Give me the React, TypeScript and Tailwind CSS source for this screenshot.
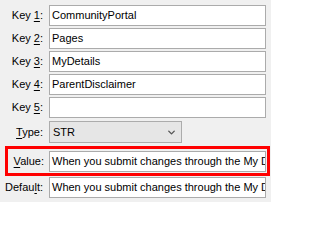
import { ChevronDown } from 'lucide-react'

const font = { fontFamily: '"Liberation Sans", Arial, sans-serif' }

function Label({ pre, key_, post, className = '' }: { pre: string; key_: string; post: string; className?: string }) {
  return (
    <span className={`w-[44px] shrink-0 text-right pr-[1px] text-[11px] text-black whitespace-nowrap ${className}`}>
      {pre}
      <span className="underline underline-offset-[2px]">{key_}</span>
      {post}
    </span>
  )
}

function TextBox({ value }: { value: string }) {
  return (
    <div className="ml-[5px] flex h-[21px] w-[217px] items-center overflow-hidden whitespace-nowrap border border-[#ababab] bg-white pl-[2px] text-[11px] text-black">
      {value}
    </div>
  )
}

const keys = [
  { n: '1', v: 'CommunityPortal' },
  { n: '2', v: 'Pages' },
  { n: '3', v: 'MyDetails' },
  { n: '4', v: 'ParentDisclaimer' },
  { n: '5', v: '' },
]

const text = 'When you submit changes through the My Details page, a notification will be sent'

export default function App() {
  return (
    <div className="h-[202px] w-[271px] bg-[#f0f0f0] pt-[5px]" style={font}>
      <div className="flex flex-col gap-[2px]">
        {keys.map((k) => (
          <div key={k.n} className="flex items-center">
            <Label pre="Key " key_={k.n} post=":" />
            <TextBox value={k.v} />
          </div>
        ))}
      </div>

      <div className="mt-[3px] flex items-center">
        <Label pre="" key_="T" post="ype:" />
        <div className="ml-[5px] flex h-[22px] w-[133px] items-center justify-between border border-[#acacac] bg-[#e6e6e6] pl-[3px] pr-[4px] text-[11px] text-black">
          <span>STR</span>
          <ChevronDown size={11} strokeWidth={3} className="text-[#555]" />
        </div>
      </div>

      <div className="ml-[5px] mt-[3px] flex h-[30px] w-[265px] items-center border-[3px] border-[#ff0000]">
        <span className="w-[36px] shrink-0 text-right text-[11px] text-black">
          <span className="underline underline-offset-[2px]">V</span>alue:
        </span>
        <TextBox value={text} />
      </div>

      <div className="mt-[1px] flex items-center">
        <Label pre="Defau" key_="l" post="t:" />
        <TextBox value={text} />
      </div>
    </div>
  )
}
